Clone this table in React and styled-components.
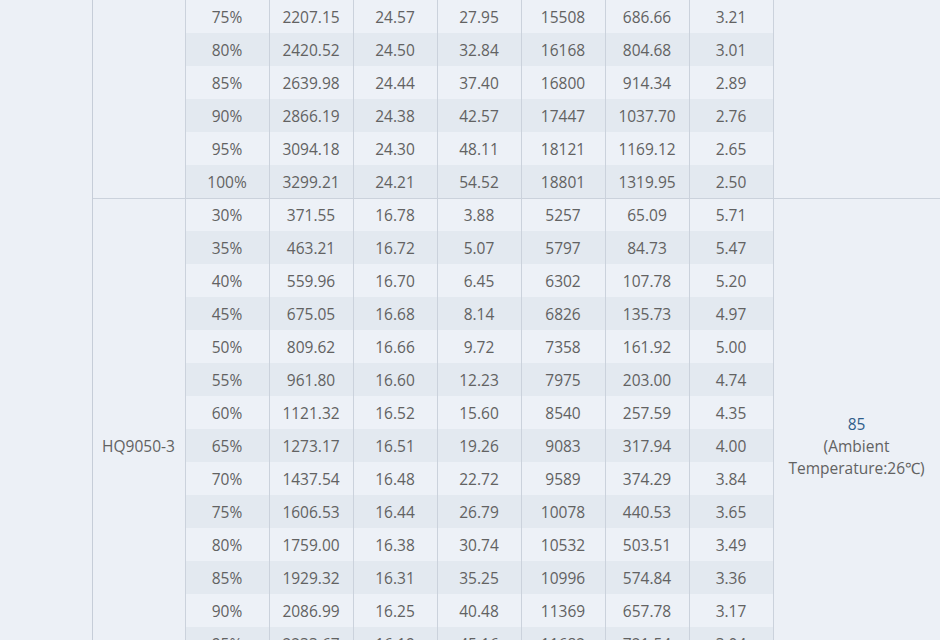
import React from "react";
import styled, { createGlobalStyle } from "styled-components";

const Global = createGlobalStyle`
  html, body {
    margin: 0;
    padding: 0;
    overflow: hidden;
    background: #ecf0f6;
  }
  body {
    font-family: "Open Sans", "Liberation Sans", sans-serif;
    color: #666;
  }
`;

const Page = styled.div`
  width: 940px;
  height: 640px;
  overflow: hidden;
  background: #ecf0f6;
`;

const Table = styled.table`
  width: 940px;
  table-layout: fixed;
  border-collapse: collapse;
  font-size: 15.5px;
  line-height: 22px;
  color: #626262;
`;

const Col = styled.col`
  width: ${(p) => p.$w}px;
`;

const Row = styled.tr`
  height: 33px;
  border-top: ${(p) => (p.$groupStart ? "1px solid #cbd2dc" : "none")};
`;

const Cell = styled.td`
  padding: 1px 2px 0;
  text-align: center;
  vertical-align: middle;
  white-space: nowrap;
  background: ${(p) => (p.$dark ? "#e3e9f0" : "#edf1f7")};
  border-left: 1px solid #cbd2dc;
  border-right: 1px solid #cbd2dc;
`;

const SpanCell = styled.td`
  padding: 1px 4px 0;
  text-align: center;
  vertical-align: middle;
  background: #ecf0f6;
  border-left: 1px solid #cbd2dc;
  border-right: 1px solid #cbd2dc;
`;

const LeadCell = styled.td`
  background: #ecf0f6;
  border-right: 1px solid #c6cdd8;
`;

const Value = styled.div`
  color: #2f5d8a;
`;

const widths = [92, 93, 84, 84, 84, 84, 84, 84, 84, 167];

const group1 = [
  ["75%", "2207.15", "24.57", "27.95", "15508", "686.66", "3.21"],
  ["80%", "2420.52", "24.50", "32.84", "16168", "804.68", "3.01"],
  ["85%", "2639.98", "24.44", "37.40", "16800", "914.34", "2.89"],
  ["90%", "2866.19", "24.38", "42.57", "17447", "1037.70", "2.76"],
  ["95%", "3094.18", "24.30", "48.11", "18121", "1169.12", "2.65"],
  ["100%", "3299.21", "24.21", "54.52", "18801", "1319.95", "2.50"],
];

const group2 = [
  ["30%", "371.55", "16.78", "3.88", "5257", "65.09", "5.71"],
  ["35%", "463.21", "16.72", "5.07", "5797", "84.73", "5.47"],
  ["40%", "559.96", "16.70", "6.45", "6302", "107.78", "5.20"],
  ["45%", "675.05", "16.68", "8.14", "6826", "135.73", "4.97"],
  ["50%", "809.62", "16.66", "9.72", "7358", "161.92", "5.00"],
  ["55%", "961.80", "16.60", "12.23", "7975", "203.00", "4.74"],
  ["60%", "1121.32", "16.52", "15.60", "8540", "257.59", "4.35"],
  ["65%", "1273.17", "16.51", "19.26", "9083", "317.94", "4.00"],
  ["70%", "1437.54", "16.48", "22.72", "9589", "374.29", "3.84"],
  ["75%", "1606.53", "16.44", "26.79", "10078", "440.53", "3.65"],
  ["80%", "1759.00", "16.38", "30.74", "10532", "503.51", "3.49"],
  ["85%", "1929.32", "16.31", "35.25", "10996", "574.84", "3.36"],
  ["90%", "2086.99", "16.25", "40.48", "11369", "657.78", "3.17"],
  ["95%", "2233.67", "16.19", "45.16", "11682", "721.54", "3.04"],
  ["100%", "2384.20", "16.12", "50.31", "12003", "796.10", "2.91"],
];

export default function App() {
  const total = group1.length + group2.length;
  return (
    <Page>
      <Global />
      <Table>
        <colgroup>
          {widths.map((w, i) => (
            <Col key={i} $w={w} />
          ))}
        </colgroup>
        <tbody>
          {group1.map((r, i) => (
            <Row key={"a" + i}>
              {i === 0 && <LeadCell rowSpan={total} />}
              {i === 0 && <SpanCell rowSpan={group1.length} />}
              {r.map((v, j) => (
                <Cell key={j} $dark={i % 2 === 1}>
                  {v}
                </Cell>
              ))}
              {i === 0 && <SpanCell rowSpan={group1.length} />}
            </Row>
          ))}
          {group2.map((r, i) => (
            <Row key={"b" + i} $groupStart={i === 0}>
              {i === 0 && <SpanCell rowSpan={group2.length}>HQ9050-3</SpanCell>}
              {r.map((v, j) => (
                <Cell key={j} $dark={i % 2 === 1}>
                  {v}
                </Cell>
              ))}
              {i === 0 && (
                <SpanCell rowSpan={group2.length}>
                  <Value>85</Value>
                  (Ambient Temperature:26℃)
                </SpanCell>
              )}
            </Row>
          ))}
        </tbody>
      </Table>
    </Page>
  );
}
